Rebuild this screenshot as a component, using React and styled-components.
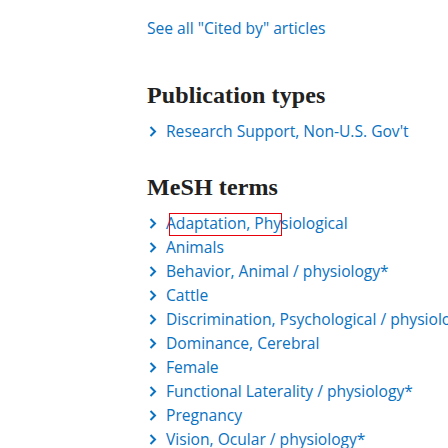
import React from 'react';
import styled, {createGlobalStyle} from 'styled-components';

const Global = createGlobalStyle`
    body {
        margin: 0;
        background: #fff;
        font-family: "Open Sans", "Noto Sans", sans-serif;
    }
`;

const Page = styled.div`
    position: relative;
    width: 448px;
    height: 448px;
    overflow: hidden;
    padding: 16px 0 0 147px;
    box-sizing: border-box;
`;

const Link = styled.a`
    color: #0a72c2;
    font-size: 15.6px;
    line-height: 24px;
    text-decoration: none;
    white-space: nowrap;
`;

const Heading = styled.h2`
    margin: ${p => p.top}px 0 9px 0;
    font-family: "Liberation Serif", "DejaVu Serif", serif;
    font-weight: bold;
    font-size: 24px;
    line-height: 30px;
    color: #212121;
    letter-spacing: 0.1px;
`;

const List = styled.ul`
    list-style: none;
    margin: 0;
    padding: 0;
`;

const Item = styled.li`
    display: flex;
    align-items: center;
    gap: 9px;
    height: 24px;
    white-space: nowrap;
`;

const Chevron = styled.svg`
    width: 8px;
    height: 11px;
    flex: none;
    margin-left: 2px;
`;

const Highlight = styled.div`
    position: absolute;
    left: 169px;
    top: 213px;
    width: 111px;
    height: 21px;
    border: 1px solid #e8000b;
`;

const Arrow = () => (
    <Chevron viewBox="0 0 8 11">
        <path d="M1.5 1 L6 5.5 L1.5 10" fill="none" stroke="#0a72c2" strokeWidth="2" />
    </Chevron>
);

const pubTypes = ["Research Support, Non-U.S. Gov't"];

const meshTerms = [
    'Adaptation, Physiological',
    'Animals',
    'Behavior, Animal / physiology*',
    'Cattle',
    'Discrimination, Psychological / physiology*',
    'Dominance, Cerebral',
    'Female',
    'Functional Laterality / physiology*',
    'Pregnancy',
    'Vision, Ocular / physiology*'
];

export default function App() {
    return (
        <Page>
            <Global />
            <Link href="#">See all "Cited by" articles</Link>

            <Heading top={40}>Publication types</Heading>
            <List>
                {pubTypes.map(t => (
                    <Item key={t}><Arrow /><Link href="#">{t}</Link></Item>
                ))}
            </List>

            <Heading top={29}>MeSH terms</Heading>
            <List>
                {meshTerms.map(t => (
                    <Item key={t}><Arrow /><Link href="#">{t}</Link></Item>
                ))}
            </List>

            <Highlight />
        </Page>
    );
}
